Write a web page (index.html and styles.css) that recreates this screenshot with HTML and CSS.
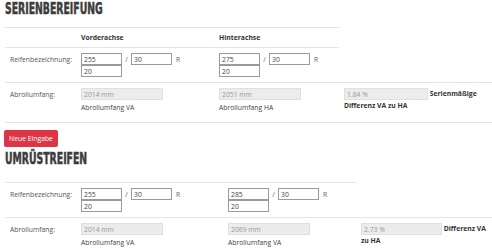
FILE: index.html
```html
<!DOCTYPE html>
<html lang="de">
<head>
    <meta charset="UTF-8">
    <meta name="viewport" content="width=device-width, initial-scale=1.0">
    <title>Abrollumfang Rechner</title>
    <link rel="stylesheet" href="styles.css">
</head>
<body>
    <div class="page">
        <h2 class="title"><span>SERIENBEREIFUNG</span></h2>
        <table class="calc serie">
            <colgroup>
                <col class="c-label">
                <col class="c-va">
                <col class="c-ha">
                <col>
            </colgroup>
            <tr class="head">
                <th></th>
                <th>Vorderachse</th>
                <th>Hinterachse</th>
            </tr>
            <tr class="tire">
                <td class="lbl">Reifenbezeichnung:</td>
                <td>
                    <div class="line"><input class="inp" value="255"><span class="sep">/</span><input class="inp" value="30"><span class="r">R</span></div>
                    <div class="line"><input class="inp" value="20"></div>
                </td>
                <td>
                    <div class="line"><input class="inp" value="275"><span class="sep">/</span><input class="inp" value="30"><span class="r">R</span></div>
                    <div class="line"><input class="inp" value="20"></div>
                </td>
            </tr>
            <tr class="roll">
                <td class="lbl">Abrollumfang:</td>
                <td><input class="out" value="2014 mm" disabled><div class="hint">Abrollumfang VA</div></td>
                <td><input class="out" value="2051 mm" disabled><div class="hint">Abrollumfang HA</div></td>
                <td class="diff"><input class="out pct" value="1.84 %" disabled> <b>Serienmäßige Differenz VA zu HA</b></td>
            </tr>
        </table>

        <button class="btn-red">Neue Eingabe</button>

        <h2 class="title second"><span>UMRÜSTREIFEN</span></h2>
        <table class="calc umruest">
            <colgroup>
                <col class="c-label">
                <col class="c-va">
                <col class="c-ha">
                <col>
            </colgroup>
            <tr class="tire">
                <td class="lbl">Reifenbezeichnung:</td>
                <td>
                    <div class="line"><input class="inp" value="255"><span class="sep">/</span><input class="inp" value="30"><span class="r">R</span></div>
                    <div class="line"><input class="inp" value="20"></div>
                </td>
                <td>
                    <div class="line"><input class="inp" value="285"><span class="sep">/</span><input class="inp" value="30"><span class="r">R</span></div>
                    <div class="line"><input class="inp" value="20"></div>
                </td>
            </tr>
            <tr class="roll">
                <td class="lbl">Abrollumfang:</td>
                <td><input class="out" value="2014 mm" disabled><div class="hint">Abrollumfang VA</div></td>
                <td><input class="out" value="2069 mm" disabled><div class="hint">Abrollumfang VA</div></td>
                <td class="diff"><input class="out pct" value="2.73 %" disabled> <b>Differenz VA zu HA</b></td>
            </tr>
        </table>
    </div>
</body>
</html>
```

FILE: styles.css
```css
*{ box-sizing: border-box;}
html, body{
    margin:0;
    overflow:hidden;
}
body{
    background:#fff;
    font-family: "Open Sans", "Liberation Sans", sans-serif;
    font-size:6.8px;
    color:#555;
}
.page{
    padding:0 0 0 5px;
    width:492px;
}
.title{
    margin:0;
    height:27px;
    font-family: "DejaVu Sans Condensed", "Liberation Sans Narrow", sans-serif;
    font-stretch: condensed;
    font-weight:bold;
    font-size:15px;
    line-height:18px;
    color:#3c3c3c;
    white-space:nowrap;
    -webkit-text-stroke:0.5px #3c3c3c;
}
.title span{
    display:inline-block;
    transform:scaleX(0.69);
    transform-origin:left center;
}
.title.second{
    height:32px;
    margin-top:3px;
}
.calc{
    width:487px;
    border-collapse: collapse;
    table-layout: fixed;
}
.calc th, .calc td{
    border-top:1px solid #e3e6e9;
    padding:5px;
    text-align:left;
    vertical-align:top;
}
.calc th{
    color:#333;
    font-weight:bold;
    line-height:9px;
}
.serie{
    border-bottom:1px solid #e3e6e9;
}
.serie .c-label{ width:71px;}
.serie .c-va{ width:138px;}
.serie .c-ha{ width:125px;}
.calc.umruest{
    width:490px;
}
.umruest .c-label{ width:71px;}
.umruest .c-va{ width:147px;}
.umruest .c-ha{ width:133px;}
.tire td{
    padding-top:5px;
    padding-bottom:5px;
}
.roll td{
    padding-top:5px;
    padding-bottom:9px;
}
.calc td.lbl{
    line-height:12px;
    padding-top:6px;
}
.calc td.diff{
    padding-right:0;
}
.line{
    display:flex;
    align-items:center;
    height:12px;
}
.inp, .out{
    font-family: "Open Sans", "Liberation Sans", sans-serif;
    font-size:6.8px;
    height:12px;
    margin:0;
    padding:0 2px;
    border:1px solid #9a9a9a;
    border-radius:0;
    color:#444;
    background:#fff;
    vertical-align:top;
}
.inp{
    width:41px;
}
.sep{
    width:9px;
    text-align:center;
    color:#666;
}
.r{
    margin-left:4px;
    color:#666;
}
.out{
    width:82px;
    background:#ececec;
    border-color:#e0e0e0;
    color:#999;
}
.out.pct{
    width:84px;
}
.umruest .out.pct{
    width:81px;
}
.hint{
    margin-top:2px;
    line-height:11px;
    color:#444;
}
.roll b{
    color:#333;
    line-height:12px;
}
.btn-red{
    display:block;
    margin:7px 0 0 -1px;
    width:54px;
    height:17px;
    padding:0;
    border:0;
    border-radius:2px;
    background:#dc3545;
    color:#fff;
    font-family: "Open Sans", "Liberation Sans", sans-serif;
    font-size:6.8px;
}
```
